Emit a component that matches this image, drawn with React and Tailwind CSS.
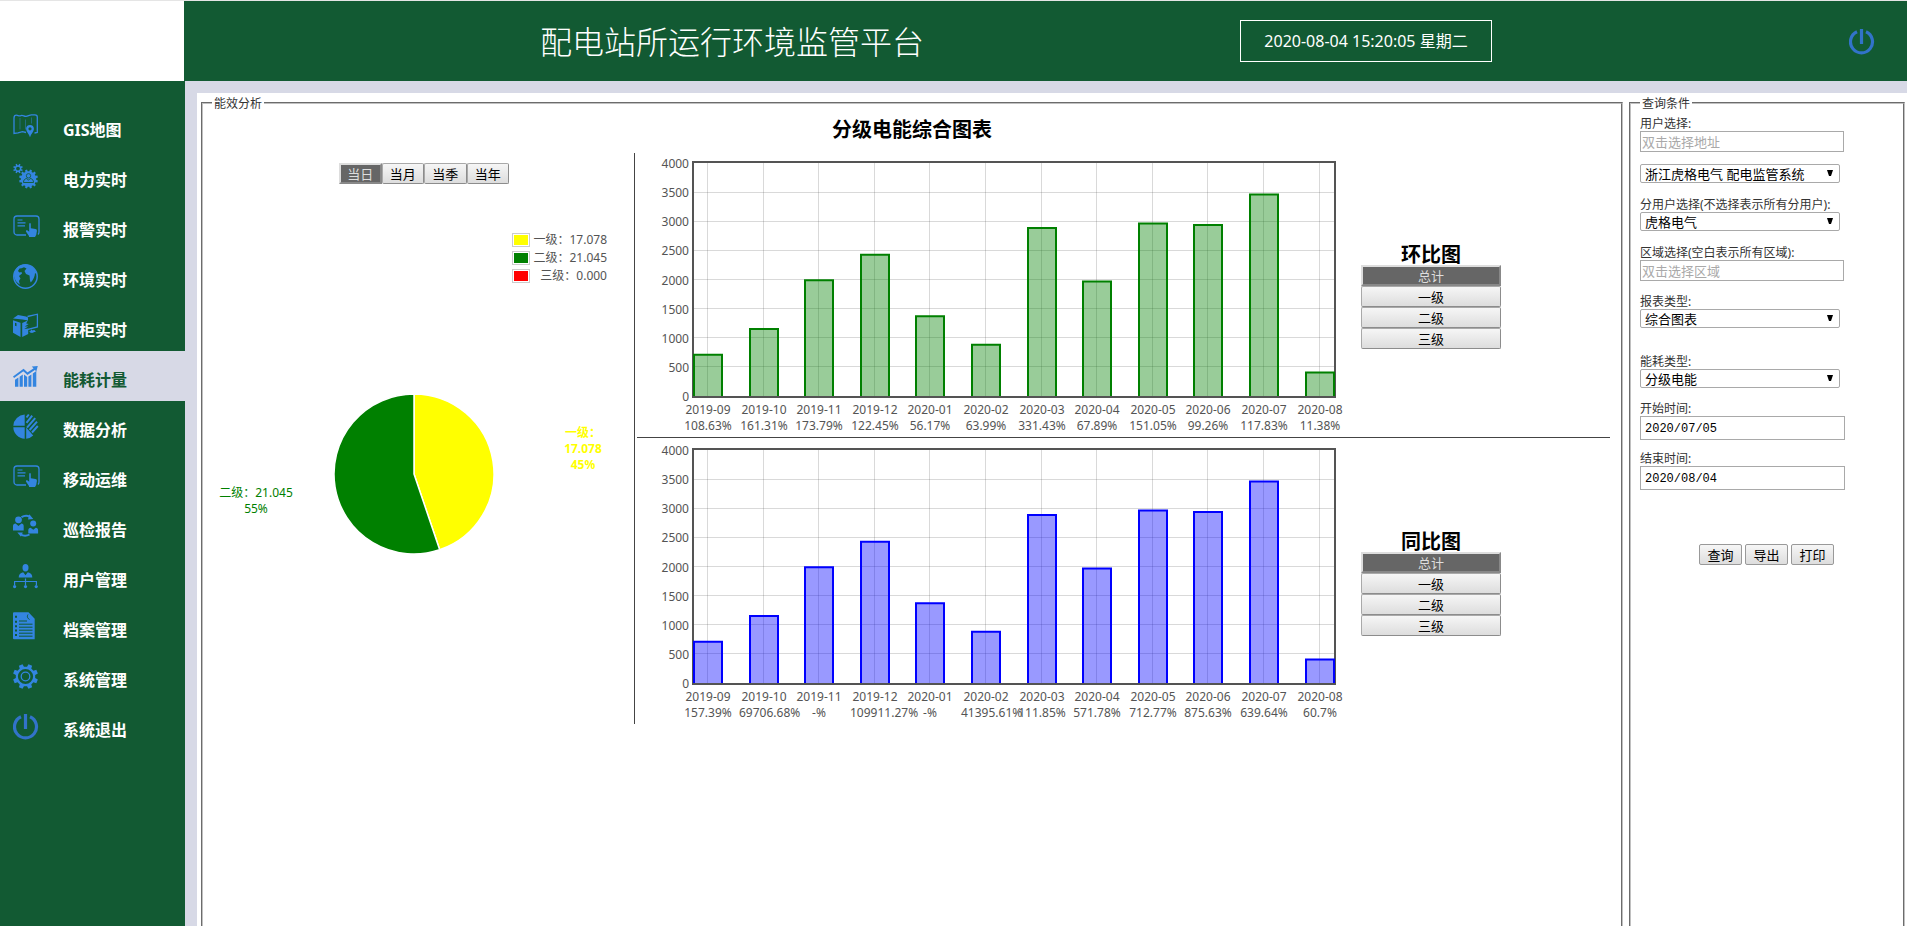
import React, { useState } from 'react';

const MONTHS = [
  '2019-09', '2019-10', '2019-11', '2019-12', '2020-01', '2020-02',
  '2020-03', '2020-04', '2020-05', '2020-06', '2020-07', '2020-08',
];
const VALUES = [710, 1150, 1985, 2425, 1370, 880, 2885, 1965, 2960, 2935, 3460, 405];
const CHAIN_RATES = [
  '108.63%', '161.31%', '173.79%', '122.45%', '56.17%', '63.99%',
  '331.43%', '67.89%', '151.05%', '99.26%', '117.83%', '11.38%',
];
const YEAR_RATES = [
  '157.39%', '69706.68%', '-%', '109911.27%', '-%', '41395.61%',
  '111.85%', '571.78%', '712.77%', '875.63%', '639.64%', '60.7%',
];
const LEVELS = ['总计', '一级', '二级', '三级'];

// toothed wheel outline
const gearPath = (cx, cy, outer, inner, teeth) => {
  const pts = [];
  const step = (Math.PI * 2) / teeth;
  for (let i = 0; i < teeth; i++) {
    const a = (i + 0.5) * step - Math.PI / 2;
    [[-0.3, inner], [-0.2, outer], [0.2, outer], [0.3, inner]].forEach(([k, r]) => {
      pts.push(`${(cx + r * Math.cos(a + k * step)).toFixed(2)} ${(cy + r * Math.sin(a + k * step)).toFixed(2)}`);
    });
  }
  return `M${pts.join('L')}Z`;
};

const circlePath = (cx, cy, r) =>
  `M${cx - r} ${cy}a${r} ${r} 0 1 0 ${r * 2} 0a${r} ${r} 0 1 0 ${-r * 2} 0Z`;

const PowerShape = () => (
  <g fill="none" stroke="#3273c9" strokeWidth="3.2">
    <path d="M8 4.8A11 11 0 1 0 17 4.8" />
    <path d="M12.5 2v15" />
  </g>
);

const CardShape = () => (
  <>
    <path d="M13 23H4a3 3 0 0 1-3-3V7a3 3 0 0 1 3-3h19a3 3 0 0 1 3 3v13a3 3 0 0 1-1 2.4" fill="none" stroke="currentColor" strokeWidth="1.3" />
    <path d="M4.500 8h5M4.500 10.800h8M4.500 13.800h7.500" stroke="currentColor" strokeWidth="1.2" />
    <path d="M16.200 12c0-1.300 1.600-1.300 1.600 0v4.200l4.700.9c1 .2 1.500.8 1.400 1.800l-.7 4-1 1.600V25h-6.200v-1l-2.900-4.300c-.7-1.200.5-2 1.500-1.200l1.600 1.300Z" fill="currentColor" />
  </>
);

const icons = {
  map: (
    <>
      <path d="M13 20.500 9.500 19.700 5 20.800 1 21.500V6C1 4.300 2 3.200 3.500 3.200 5 3.200 6 4.500 8 3.600 10 2.800 11 4.600 13 4.400 15 4.200 16.500 2.800 18.500 2.800H22C23.500 2.800 24.300 3.600 24.300 5V20.500L21.500 21" fill="none" stroke="currentColor" strokeWidth="1.3" />
      <path d="M7 6v11.500M12.500 7.500v10M18.500 5.500v6" stroke="currentColor" strokeWidth="1" opacity=".45" />
      <path d={`M17 25.200c-.8-3-3.900-5.300-3.900-8.200a3.900 3.900 0 0 1 7.800 0c0 2.900-3.100 5.200-3.900 8.200Z${circlePath(17, 16.800, 1.600)}`} fill="currentColor" fillRule="evenodd" />
    </>
  ),
  gears: (
    <>
      <path d={gearPath(5, 6.600, 4.900, 3.400, 8) + circlePath(5, 6.600, 1.900)} fill="currentColor" fillRule="evenodd" />
      <path d={gearPath(15.500, 17, 9.500, 7.700, 12)} fill="currentColor" />
      <circle cx="15.500" cy="13.800" r="2.200" fill="none" stroke="#125a33" strokeWidth=".8" />
      <path d="M13.800 16.500c-2.300.4-3.300 1.600-3.300 4h10c0-2.400-1-3.600-3.300-4l-1.700 1.700Z" fill="none" stroke="#125a33" strokeWidth=".9" />
    </>
  ),
  card: <CardShape />,
  globe: (
    <>
      <circle cx="12.500" cy="14.500" r="11.700" fill="none" stroke="currentColor" strokeWidth="1.500" />
      <path d="M1 14C1 8 5 2.800 12 2.600c6-.1 11 4.500 12 9.900l-2-1.500c0 3-1.500 6.500-4.200 9.500-1.300-2-.8-4.500-1.300-7l-3.500-1.500-1.500-3 2-2.500-2.500-1.300-2.500 1-2 .3-1.500 2.500 1.500 1.500 2-.5.5 1.500-3 2.500 1.500 2.500-1.500 2.500.8 3.500C4 21 1.500 18 1 14Z" fill="currentColor" />
    </>
  ),
  cabinet: (
    <>
      <path d="M0 6.500 5 3l8 1.500 2 1v3L9.500 7.600 0 6.500ZM0 8.200l7.500 2.500V25L0 20.800V8.200Zm2 2.500v3l1.500.5v-3L2 10.700Zm7.200.2 5.500-2.400-1.500 3 2.500.5-4 2.500h3.500l-4 2.500 4-.5v5.500L9.200 25V10.900Z" fill="currentColor" fillRule="evenodd" />
      <path d="M14.500 4.500 24.400 2.200V15l-9.500 2.400M18 18l1.500 2 2.500-1" fill="none" stroke="currentColor" strokeWidth="1.300" />
      <path d="M16 19.500 21 18l2 1.500-5 1.500Z" fill="currentColor" />
    </>
  ),
  energy: (
    <>
      <path d="M.5 15.300 10.500 8l4 3.700 7.500-5" fill="none" stroke="currentColor" strokeWidth="2" />
      <path d="M18.800 4.500 24.800 4l-1.500 5.600Z" fill="currentColor" />
      <path d="M2 17.800 5.400 15.500v9.200H2ZM6.600 14.800 9.800 12.500v12.200H6.600ZM11 12.500l3.200 2.500v9.700H11ZM15.400 14.500l3-2v12.200h-3ZM19.800 11.500l3.500-2.500v15.700h-3.500Z" fill="currentColor" />
    </>
  ),
  pie: (
    <>
      <path d="M11.700 2.600v11.200H.3A11.900 11.900 0 0 1 11.700 2.600ZM.3 15.300h11.400v11.500A11.900 11.900 0 0 1 .3 15.300ZM13.200 15.600l7 8A11.500 11.500 0 0 1 13.200 26.800Z" fill="currentColor" />
      <path d="M13.500 5.500 15.800 2.500M13.500 10.800 19.200 3.700M14 15.600 22.200 6.200M16.600 18 24 9.600M19 20.500 24.800 14" stroke="currentColor" strokeWidth="2" />
    </>
  ),
  patrol: (
    <>
      <circle cx="5.500" cy="7.800" r="3.400" fill="currentColor" />
      <path d="M0 18.500v-4.300c0-1.500 1-2.300 2.600-2.600l2.900 2.400 2.900-2.400c1.600.3 2.300 1.100 2.300 2.600v4.300ZM15.300 21.500v-3.300c0-1.500 1-2.300 2.300-2.500l2.700 2 2.500-2c1.500.2 2.300 1 2.300 2.500v3.300Z" fill="currentColor" />
      <circle cx="20.200" cy="11.500" r="3" fill="currentColor" />
      <path d="M8.500 5.200c3-2 6-1.800 8.500-.4M16.500 22.500c-3 1.700-6.500 1.500-9-.3" fill="none" stroke="currentColor" strokeWidth="2" />
      <path d="M16.300 2.300 20.300 7l-5.300.5ZM4.300 20.500h5.500l-1.800 4.300Z" fill="currentColor" />
    </>
  ),
  org: (
    <>
      <ellipse cx="12.500" cy="5.700" rx="3" ry="3.700" fill="currentColor" />
      <path d="M5.700 15.500c0-3 1.500-4.700 4.500-5.300l2.300 3 2.300-3c3 .6 4.500 2.300 4.500 5.300Z" fill="currentColor" />
      <path d="M1.600 23v-3.500h21.800V23M12.500 16.500V23" fill="none" stroke="currentColor" strokeWidth="1.200" />
      <circle cx="1.600" cy="24.600" r="1.600" fill="currentColor" />
      <circle cx="12.500" cy="24.600" r="1.600" fill="currentColor" />
      <circle cx="23.200" cy="24.600" r="1.600" fill="currentColor" />
    </>
  ),
  doc: (
    <>
      <path d="M1 .3h14.500l6.200 6.500v20.500H1a1 1 0 0 1-1-1V1.300a1 1 0 0 1 1-1Z" fill="currentColor" />
      <path d="M6 9h8M6 12.200h13.500M6 15.200h13.500M6 18.200h13.500M6 21.200h13.500M6 24.200h13.500M15 2.500c-1.500 2.500 0 4 1.500 5" fill="none" stroke="#125a33" strokeWidth="1" />
      <path d="M2 4.800h2M2 9.800h2M2 14.200h2M2 18.600h2M2 23h2" stroke="#125a33" strokeWidth="2" />
    </>
  ),
  gear: (
    <>
      <path d={gearPath(12.500, 14.500, 12.700, 9.800, 8) + circlePath(12.500, 14.500, 7.600)} fill="currentColor" fillRule="evenodd" />
      <circle cx="12.500" cy="14.500" r="4.300" fill="none" stroke="currentColor" strokeWidth="1.300" />
    </>
  ),
  power: <PowerShape />,
};

const MENU = [
  { name: 'GIS地图', icon: 'map' },
  { name: '电力实时', icon: 'gears' },
  { name: '报警实时', icon: 'card' },
  { name: '环境实时', icon: 'globe' },
  { name: '屏柜实时', icon: 'cabinet' },
  { name: '能耗计量', icon: 'energy' },
  { name: '数据分析', icon: 'pie' },
  { name: '移动运维', icon: 'card' },
  { name: '巡检报告', icon: 'patrol' },
  { name: '用户管理', icon: 'org' },
  { name: '档案管理', icon: 'doc' },
  { name: '系统管理', icon: 'gear' },
  { name: '系统退出', icon: 'power' },
];

const BarChart = ({ rates, color, label }) => {
  const left = 56;
  const top = 9;
  const width = 642;
  const height = 235;
  const x = (i) => 71 + Math.round(i * 55.6);
  const y = (v) => top + height - 1 - (v / 4000) * (height - 2);

  return (
    <svg width="720" height="284" viewBox="0 0 720 284" role="img" aria-label={label} className="shrink-0 text-xs">
      <g stroke="#545454" strokeOpacity=".22" shapeRendering="crispEdges">
        {MONTHS.map((m, i) => <line key={m} x1={x(i) - 0.5} x2={x(i) - 0.5} y1={top} y2={top + height} />)}
        {[500, 1000, 1500, 2000, 2500, 3000, 3500].map((v) => (
          <line key={v} x1={left} x2={left + width} y1={y(v)} y2={y(v)} />
        ))}
      </g>
      <rect x={left} y={top} width={width} height={height} fill="none" stroke="#545454" strokeWidth="2" />
      {VALUES.map((v, i) => (
        <path
          key={MONTHS[i]}
          d={`M${x(i) - 14} ${top + height - 1}V${y(v)}h28V${top + height - 1}`}
          fill={color}
          fillOpacity=".4"
          stroke={color}
          strokeWidth="2"
        />
      ))}
      <g fill="#545454">
        {[0, 500, 1000, 1500, 2000, 2500, 3000, 3500, 4000].map((v) => (
          <text key={v} x="52" y={Math.round(y(v)) + 5} textAnchor="end">{v}</text>
        ))}
        {MONTHS.map((m, i) => (
          <React.Fragment key={m}>
            <text x={x(i)} y="261" textAnchor="middle">{m}</text>
            {/* long rates keep the left edge of the tick box and run over it */}
            {rates[i].length > 7
              ? <text x={x(i) - 25} y="277">{rates[i]}</text>
              : <text x={x(i)} y="277" textAnchor="middle">{rates[i]}</text>}
          </React.Fragment>
        ))}
      </g>
    </svg>
  );
};

const PieChart = () => {
  const cx = 211;
  const cy = 189;
  const r = 80;
  const angle = (17.078 / (17.078 + 21.045)) * Math.PI * 2;
  const px = cx + r * Math.sin(angle);
  const py = cy - r * Math.cos(angle);

  return (
    <svg width="431" height="300" viewBox="0 0 431 300" role="img" aria-label="分级电能占比" className="text-xs">
      <path d={`M${cx} ${cy}V${cy - r}A${r} ${r} 0 0 1 ${px} ${py}Z`} fill="#ffff00" stroke="#fff" strokeWidth="1.5" />
      <path d={`M${cx} ${cy}L${px} ${py}A${r} ${r} 0 1 1 ${cx} ${cy - r}Z`} fill="#008000" stroke="#fff" strokeWidth="1.5" />
      <g fill="#008000" textAnchor="middle">
        <text x="53" y="212">二级：21.045</text>
        <text x="53" y="228">55%</text>
      </g>
      <g fill="#ffff00" textAnchor="middle" className="font-bold">
        <text x="380" y="152">一级：</text>
        <text x="380" y="168">17.078</text>
        <text x="380" y="184">45%</text>
      </g>
    </svg>
  );
};

const ToggleButton = ({ active, onClick, children }) => (
  <button
    type="button"
    onClick={onClick}
    className={
      active
        ? 'h-[21px] w-full border-2 border-t-[#dddddd] border-l-[#dddddd] border-r-[#888888] border-b-[#888888] bg-[#666666] text-[13px] leading-[16px] text-[#dddddd]'
        : 'h-[21px] w-full rounded-[2px] border border-t-[#a9a9a9] border-l-[#a9a9a9] border-r-[#8c8c8c] border-b-[#8c8c8c] bg-linear-to-b from-[#f6f6f6] to-[#dddddd] text-[13px] leading-[16px] text-black'
    }
  >
    {children}
  </button>
);

const LevelPicker = ({ title }) => {
  const [level, setLevel] = useState('总计');
  return (
    <div className="ml-1 w-[140px] shrink-0">
      <h3 className="h-6 text-center text-[20px] leading-[28px] font-bold">{title}</h3>
      <div className="grid">
        {LEVELS.map((l) => (
          <ToggleButton key={l} active={l === level} onClick={() => setLevel(l)}>{l}</ToggleButton>
        ))}
      </div>
    </div>
  );
};

const Select = ({ id, label, value }) => (
  <div className="relative w-[200px]">
    <select
      id={id}
      aria-label={label}
      defaultValue={value}
      className="block h-[19px] w-full appearance-none rounded-[2px] border border-[#a9a9a9] bg-white pl-1 text-[13px] leading-[16px] text-black"
    >
      <option>{value}</option>
    </select>
    <svg width="6" height="6" viewBox="0 0 6 6" className="pointer-events-none absolute top-[6px] right-[7px]">
      <path d="M0 0h6L4 6H2Z" fill="#000" />
    </svg>
  </div>
);

const Label = ({ htmlFor, children }) => (
  <label htmlFor={htmlFor} className="block h-4 text-xs leading-[18px] whitespace-nowrap text-[#333333]">{children}</label>
);

const textInput = 'block h-[21px] w-[204px] border border-[#a9a9a9] bg-white pl-px text-[13px] leading-[16px] placeholder:text-[#a9a9a9]';
const dateInput = 'block h-[24px] w-[205px] border border-[#a9a9a9] bg-white pt-[2px] pl-1 font-["Liberation_Mono","Noto_Sans_CJK_SC",monospace] text-xs text-black';
const actionButton = 'h-[21px] w-[43px] rounded-[2px] border border-[#999999] bg-linear-to-b from-[#f6f6f6] to-[#dddddd] text-[13px] leading-[16px] text-black';
const groupBox = 'min-h-[1000px] min-w-0 border-2 border-[#c0c0c0] [border-style:groove]';
const groupTitle = 'h-4 px-[2px] text-xs leading-[18px] text-[#333333]';

const QueryForm = () => (
  <fieldset className={`${groupBox} w-[276px] shrink-0 px-[9px]`}>
    <legend className={groupTitle}>查询条件</legend>
    <form className="pt-1" onSubmit={(e) => e.preventDefault()}>
      <Label htmlFor="user">用户选择:</Label>
      <input id="user" type="text" placeholder="双击选择地址" className={textInput} />
      <div className="mt-3">
        <Select id="system" label="系统" value="浙江虎格电气 配电监管系统" />
      </div>
      <div className="mt-[13px]">
        <Label htmlFor="subUser">分用户选择(不选择表示所有分用户):</Label>
        <Select id="subUser" value="虎格电气" />
      </div>
      <div className="mt-[13px]">
        <Label htmlFor="area">区域选择(空白表示所有区域):</Label>
        <input id="area" type="text" placeholder="双击选择区域" className={textInput} />
      </div>
      <div className="mt-3">
        <Label htmlFor="report">报表类型:</Label>
        <Select id="report" value="综合图表" />
      </div>
      <div className="mt-[25px]">
        <Label htmlFor="energy">能耗类型:</Label>
        <Select id="energy" value="分级电能" />
      </div>
      <div className="mt-3">
        <Label htmlFor="start">开始时间:</Label>
        <input id="start" type="text" defaultValue="2020/07/05" className={dateInput} />
      </div>
      <div className="mt-[10px]">
        <Label htmlFor="end">结束时间:</Label>
        <input id="end" type="text" defaultValue="2020/08/04" className={dateInput} />
      </div>
      <div className="mt-[54px] flex gap-[3px] pl-[59px]">
        <button type="submit" className={actionButton}>查询</button>
        <button type="button" className={actionButton}>导出</button>
        <button type="button" className={actionButton}>打印</button>
      </div>
    </form>
  </fieldset>
);

const LEGEND = [
  { color: 'bg-[#ffff00]', text: '一级：17.078' },
  { color: 'bg-[#008000]', text: '二级：21.045' },
  { color: 'bg-[#ff0000]', text: '三级：0.000' },
];

const Analysis = () => {
  const [period, setPeriod] = useState('当日');

  return (
    <fieldset className={`${groupBox} flex-1`}>
      <legend className={`${groupTitle} ml-[9px]`}>能效分析</legend>
      <h2 className="h-9 text-center text-[20px] leading-[38px] font-bold">分级电能综合图表</h2>
      <div className="mt-[6px] flex">
        <section className="w-[432px] shrink-0 border-r border-[#444444]">
          <div className="mt-[10px] ml-[136px] grid w-[170px] grid-cols-4">
            {['当日', '当月', '当季', '当年'].map((p) => (
              <ToggleButton key={p} active={p === period} onClick={() => setPeriod(p)}>{p}</ToggleButton>
            ))}
          </div>
          <ul className="mt-[47px] mr-[27px] ml-auto w-[95px] text-xs text-[#545454]">
            {LEGEND.map((row) => (
              <li key={row.text} className="flex h-[18px] items-center justify-between">
                <span className="h-[14px] w-[18px] border border-[#cccccc] p-px">
                  <span className={`block h-full ${row.color}`} />
                </span>
                {row.text}
              </li>
            ))}
          </ul>
          <PieChart />
        </section>
        <div className="mr-[11px] ml-[2px] min-w-0 flex-1">
          <section className="flex items-center border-b border-[#444444]">
            <BarChart rates={CHAIN_RATES} color="#008000" label="环比图" />
            <LevelPicker title="环比图" />
          </section>
          <section className="flex items-center pt-[2px]">
            <BarChart rates={YEAR_RATES} color="#0000ff" label="同比图" />
            <LevelPicker title="同比图" />
          </section>
        </div>
      </div>
    </fieldset>
  );
};

export default function App() {
  const [current, setCurrent] = useState('能耗计量');

  return (
    <div className='flex h-screen flex-col overflow-hidden border-t border-[#e5e5e5] bg-[#d7d9e6] font-["Noto_Sans","Noto_Sans_CJK_SC",sans-serif] text-black'>
      <header className="flex h-20 shrink-0 items-center bg-[#125a33]">
        <div className="h-full w-[184px] shrink-0 bg-white" />
        <h1 className="ml-[356px] pt-[2px] text-[32px] leading-[40px] font-light whitespace-nowrap text-white">配电站所运行环境监管平台</h1>
        <div className="ml-[316px] flex h-[42px] w-[252px] shrink-0 items-center justify-center border border-white text-base whitespace-nowrap text-white">
          2020-08-04 15:20:05 星期二
        </div>
        <button type="button" aria-label="退出" className="mr-[30px] ml-auto">
          <svg width="28" height="28" viewBox="0 0 28 28">
            <PowerShape />
          </svg>
        </button>
      </header>
      <div className="flex min-h-0 flex-1">
        <nav className="w-[185px] shrink-0 bg-[#125a33] pt-5">
          {MENU.map((item) => (
            <a
              key={item.name}
              href="#"
              onClick={() => setCurrent(item.name)}
              className={`flex h-[50px] items-center gap-[22px] pl-[13px] text-base font-bold ${
                item.name === current ? 'bg-[#d7d9e6] text-[#125a33]' : 'text-white'
              }`}
            >
              <svg width="28" height="28" viewBox="0 0 28 28" className="shrink-0 text-[#3385e0]">{icons[item.icon]}</svg>
              <span className="pt-2">{item.name}</span>
            </a>
          ))}
        </nav>
        <main className="mt-3 ml-3 flex min-w-0 flex-1 items-start gap-[6px] bg-white pt-[2px] pr-[2px] pl-1">
          <Analysis />
          <QueryForm />
        </main>
      </div>
    </div>
  );
}
